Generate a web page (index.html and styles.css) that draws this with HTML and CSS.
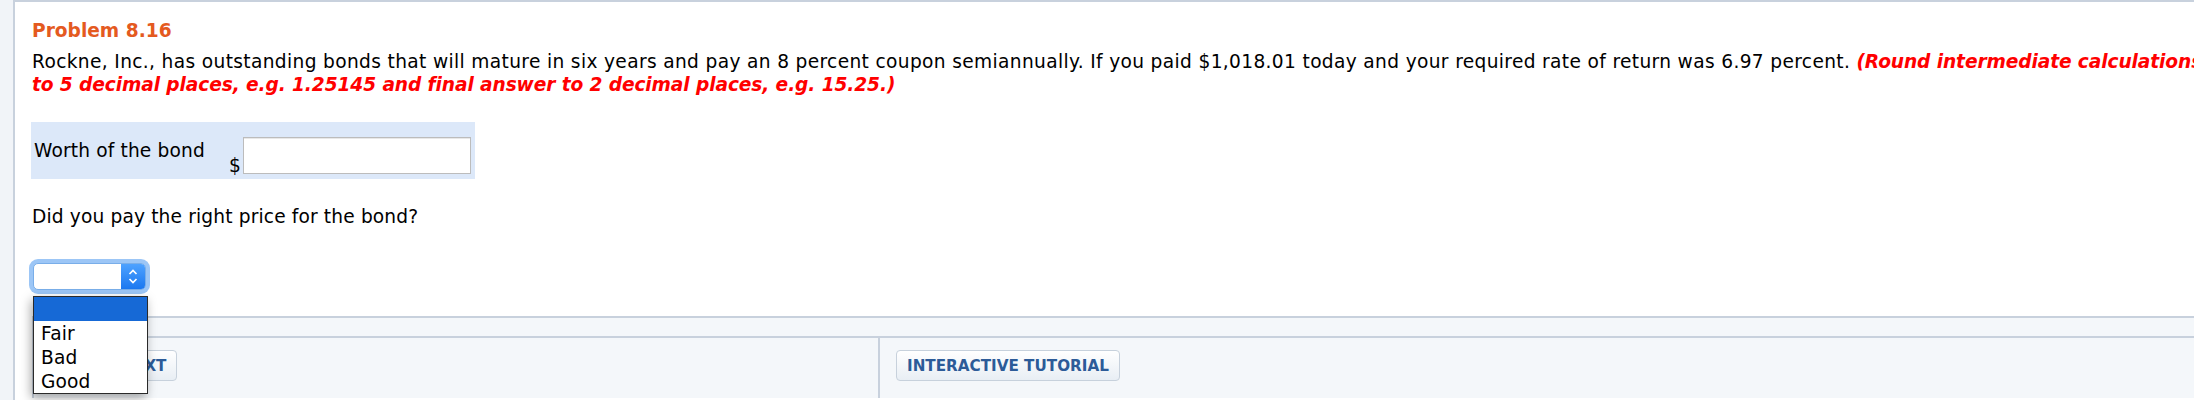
FILE: index.html
```html
<!DOCTYPE html>
<html lang="en">
  <head>
    <meta charset="UTF-8">
    <title>Problem 8.16</title>
    <link rel="stylesheet" href="styles.css">
  </head>
  <body>
    <div class="page">
      <div class="question">
        <h2 class="title">Problem 8.16</h2>
        <p class="prompt problem-text">Rockne, Inc., has outstanding bonds that will mature in six years and pay an 8 percent coupon semiannually. If you paid $1,018.01 today and your required rate of return was 6.97 percent. <em class="note">(Round intermediate calculations<br>to 5 decimal places, e.g. 1.25145 and final answer to 2 decimal places, e.g. 15.25.)</em></p>

        <div class="answer-row">
          <span class="answer-label">Worth of the bond</span>
          <span class="answer-field">
            <span class="currency">$</span>
            <input type="text" class="answer-input">
          </span>
        </div>

        <p class="prompt second">Did you pay the right price for the bond?</p>

        <div class="select-wrap">
          <div class="select">
            <span class="select-value"></span>
            <span class="select-arrow">
              <svg width="24" height="25" viewBox="0 0 24 25">
                <polyline points="8.5,10 12,6.5 15.5,10" fill="none" stroke="#fff" stroke-width="1.7"/>
                <polyline points="8.5,15 12,18.5 15.5,15" fill="none" stroke="#fff" stroke-width="1.7"/>
              </svg>
            </span>
          </div>
          <!-- open option list -->
          <ul class="select-menu">
            <li class="selected"></li>
            <li>Fair</li>
            <li>Bad</li>
            <li>Good</li>
          </ul>
        </div>
      </div>

      <div class="tools">
        <div class="tools-band"></div>
        <div class="tools-row">
          <div class="tools-cell first"><button class="tool-btn">LINK TO TEXT</button></div>
          <div class="tools-cell"><button class="tool-btn">INTERACTIVE TUTORIAL</button></div>
        </div>
      </div>
    </div>
  </body>
</html>
```

FILE: styles.css
```css
html, body {
    margin: 0;
    padding: 0;
}
body {
    font-family: "DejaVu Sans", Verdana, sans-serif;
    font-size: 18.6px;
    line-height: 23px;
    letter-spacing: 0.15px;
    color: #000;
    background: #f1f4f8;
    overflow: hidden;
    height: 400px;
}
.page {
    margin-left: 13px;
    width: 2400px;
    height: 398px;
    background: #fff;
    border-left: 2px solid #c8d1dd;
    border-top: 2px solid #c8d1dd;
}
.question {
    padding: 17px 0 0 17px;
}
.title {
    margin: 0 0 8px;
    font-size: 18.6px;
    line-height: 23px;
    font-weight: bold;
    letter-spacing: 0;
    color: #e45a1f;
}
.prompt {
    margin: 0;
}
.problem-text {
    letter-spacing: 0.35px;
}
.prompt.second {
    margin-top: 26px;
}
.note {
    color: #ff0000;
    font-weight: bold;
    letter-spacing: -0.1px;
}
.answer-row {
    display: flex;
    margin-top: 26px;
    margin-left: -1px;
    width: 444px;
    height: 57px;
    background: #dce8f9;
}
.answer-label {
    align-self: center;
    margin-left: 3px;
}
.answer-field {
    display: flex;
    align-items: flex-end;
    align-self: flex-end;
    margin-left: auto;
    padding: 0 4px 5px 0;
}
.currency {
    margin: 0 2px -3px 0;
}
.answer-input {
    box-sizing: border-box;
    width: 228px;
    height: 37px;
    margin: 0;
    border: 1px solid #bcbcbc;
    box-shadow: inset 0 1px 0 #e8e8e8;
    background: #fff;
}
.select-wrap {
    position: relative;
    margin: 35px 0 0 1px;
    width: 113px;
    height: 27px;
}
.select {
    box-sizing: border-box;
    display: flex;
    height: 27px;
    border: 1px solid #79aee9;
    border-radius: 5px;
    background: #fff;
    box-shadow: 0 0 0 4px #9cc6f6;
}
.select-arrow {
    margin-left: auto;
    width: 24px;
    border-radius: 0 4px 4px 0;
    background: linear-gradient(#4ea2ff, #1b78f0);
}
.select-arrow svg {
    display: block;
}
.select-menu {
    position: absolute;
    top: 33px;
    left: 0;
    width: 113px;
    margin: 0;
    padding: 0;
    list-style: none;
    background: #fff;
    border: 1px solid #2a2a2a;
    box-shadow: -2px 4px 10px rgba(0,0,0,0.35);
    z-index: 2;
}
.select-menu li {
    height: 24px;
    line-height: 25px;
    padding-left: 7px;
}
.select-menu li.selected {
    background: #1669d6;
}
.tools {
    margin: 26px 0 0 17px;
    background: #f4f7fa;
    border-left: 2px solid #c8d1dd;
    border-top: 2px solid #c8d1dd;
}
.tools-band {
    height: 18px;
    border-bottom: 2px solid #c8d1dd;
}
.tools-row {
    display: flex;
    height: 60px;
}
.tools-cell {
    padding: 12px 16px;
}
.tools-cell.first {
    box-sizing: border-box;
    width: 846px;
    padding-left: 5px;
    border-right: 2px solid #c8d1dd;
}
.tool-btn {
    height: 31px;
    padding: 0 10px;
    font-family: "DejaVu Sans", Verdana, sans-serif;
    font-size: 15.2px;
    font-weight: bold;
    letter-spacing: 0;
    color: #2c5b98;
    border: 1px solid #c7d1dc;
    border-radius: 4px;
    background: linear-gradient(#ffffff, #e8eef4);
}
```
